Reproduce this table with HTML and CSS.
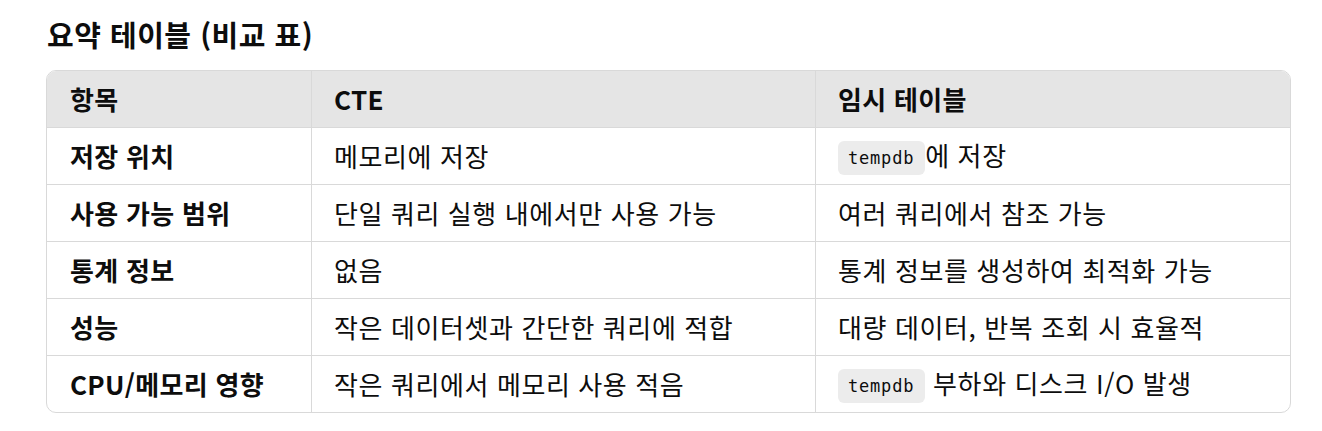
FILE: index.html
```html
<!DOCTYPE html>
<html lang="ko">
<head>
<meta charset="utf-8">
<link rel="stylesheet" href="styles.css">
</head>
<body>
<h3 class="title">요약 테이블 (비교 표)</h3>
<div class="table-wrap">
<table class="cmp">
<thead>
<tr><th class="c1">항목</th><th class="c2">CTE</th><th class="c3">임시 테이블</th></tr>
</thead>
<tbody>
<tr><td class="key">저장 위치</td><td>메모리에 저장</td><td><code>tempdb</code>에 저장</td></tr>
<tr><td class="key">사용 가능 범위</td><td>단일 쿼리 실행 내에서만 사용 가능</td><td>여러 쿼리에서 참조 가능</td></tr>
<tr><td class="key">통계 정보</td><td>없음</td><td>통계 정보를 생성하여 최적화 가능</td></tr>
<tr><td class="key">성능</td><td>작은 데이터셋과 간단한 쿼리에 적합</td><td>대량 데이터, 반복 조회 시 효율적</td></tr>
<tr><td class="key">CPU/메모리 영향</td><td>작은 쿼리에서 메모리 사용 적음</td><td><code>tempdb</code> 부하와 디스크 I/O 발생</td></tr>
</tbody>
</table>
</div>
</body>
</html>
```
FILE: styles.css
```css
html, body {
  margin: 0;
  padding: 0;
  background: #ffffff;
}
body {
  font-family: "Noto Sans CJK KR", "Noto Sans", sans-serif;
  color: #0d0d0d;
  padding: 0 31px 0 46px;
}
.title {
  margin: 0;
  padding-top: 16px;
  height: 70px;
  box-sizing: border-box;
  font-size: 29px;
  font-weight: 700;
  line-height: 36px;
  letter-spacing: 0.5px;
  padding-left: 1px;
}
.table-wrap {
  border: 1px solid #d9d9d9;
  border-radius: 10px;
  overflow: hidden;
}
.cmp {
  width: 100%;
  border-collapse: collapse;
  font-size: 26px;
  letter-spacing: 0.6px;
}
.cmp th, .cmp td {
  text-align: left;
  padding: 0 22px;
  height: 56px;
  line-height: 32px;
  border-left: 1px solid #d9d9d9;
  border-top: 1px solid #d9d9d9;
  vertical-align: middle;
  white-space: nowrap;
}
.cmp th:first-child, .cmp td:first-child {
  border-left: none;
  padding-left: 23px;
}
.cmp thead th {
  border-top: none;
  background: #e5e5e5;
  font-weight: 700;
  letter-spacing: 0.3px;
}
.cmp .c1 { width: 219px; }
.cmp .c2 { width: 459px; }
.key { font-weight: 700; letter-spacing: 0.3px; }
code {
  font-family: "DejaVu Sans Mono", monospace;
  font-size: 17px;
  background: #ececec;
  border-radius: 6px;
  padding: 7px 11px 7px 10px;
  letter-spacing: 0.8px;
  vertical-align: 2px;
}
```
